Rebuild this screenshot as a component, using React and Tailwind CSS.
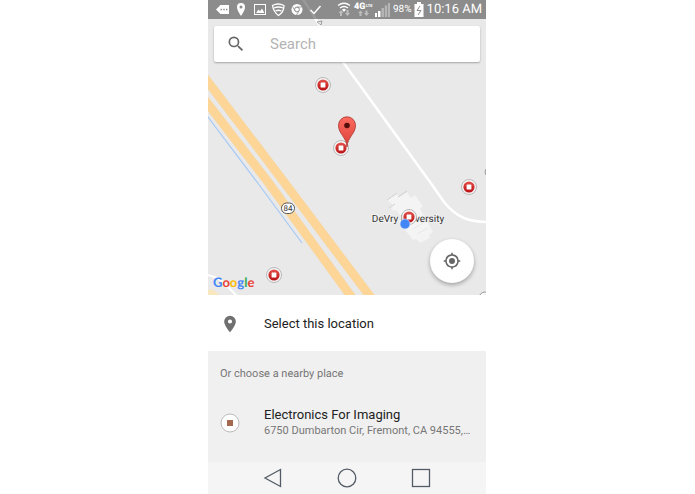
function Poi({ x, y }) {
  return (
    <g transform={`translate(${x} ${y})`}>
      <circle r="7.5" fill="#f6f6f6" stroke="#a9a9a9" strokeWidth="0.8" />
      <circle r="5.6" fill="url(#poi)" />
      <rect x="-2.4" y="-2.4" width="4.8" height="4.8" rx="0.5" fill="#fff" />
    </g>
  );
}

function MapCanvas() {
  return (
    <svg
      className="absolute inset-0 h-full w-full"
      viewBox="0 0 278 295"
      preserveAspectRatio="xMidYMid slice"
      role="img"
      aria-label="Map"
    >
      <defs>
        <linearGradient id="poi" x1="0" y1="0" x2="0" y2="1">
          <stop offset="0" stopColor="#e2524c" />
          <stop offset="1" stopColor="#b80f14" />
        </linearGradient>
        <linearGradient id="pin" x1="0" y1="0" x2="0" y2="1">
          <stop offset="0" stopColor="#fb6a60" />
          <stop offset="1" stopColor="#dd4138" />
        </linearGradient>
      </defs>
      <rect width="278" height="295" fill="#e9e9e9" />
      <g fill="none">
        <path d="M-12 66L0 82L76 182L161 295L173 311" stroke="#f6d7a4" strokeWidth="9" />
        <path d="M-12 66L0 82L76 182L161 295L173 311" stroke="#fdd597" strokeWidth="7.6" />
        <path d="M-12 88L0 104L60 182L142 295L154 311" stroke="#f6d7a4" strokeWidth="9" />
        <path d="M-12 88L0 104L60 182L142 295L154 311" stroke="#fdd597" strokeWidth="7.6" />
        <path d="M-4 112L0 117L52 186L94 243" stroke="#a5c9f5" strokeWidth="1.2" />
        <path d="M93 -4L135 62L222 182L236 202Q246 214 256 218T279 222" stroke="#fff" strokeWidth="2.5" />
        <path d="M0 275Q8 277 14 281L29 296" stroke="#fff" strokeWidth="2" />
        <path d="M109 22l5-1-1 4z" stroke="#8a8a8a" strokeWidth="0.8" />
        <circle cx="281" cy="172" r="4" stroke="#999" />
        <circle cx="277" cy="298" r="6" fill="#f6f6f6" stroke="#999" />
      </g>
      <path d="M0 295V290L4 289L12 295Z" fill="#f8e7bf" />
      <path
        d="M179 200L189 194L191 197L199 192L203 198L207 195L215 206L212 209L218 220L225 232L221 235L222 238L212 243L208 239L205 240L191 222L194 218L188 210L185 211L182 207L185 205Z"
        fill="#f4f4f4"
      />
      <path d="M179 200L189 193M181 208L187 204M190 197L199 191" stroke="#c9c9c9" strokeWidth="0.8" />
      <path d="M202 224L212 218M205 229L215 223M209 234L220 228" stroke="#e5e5e5" strokeWidth="0.8" />
      <rect x="73.500" y="203" width="13" height="10.500" rx="5.200" fill="#fff" stroke="#555" />
      <text x="80" y="211" textAnchor="middle" fontSize="8" fontFamily="Roboto, sans-serif" fill="#333">84</text>
      <text x="200" y="222" textAnchor="middle" fontSize="10" fontFamily="Roboto, sans-serif" fill="#333" stroke="#f1f1f1" strokeWidth="2" paintOrder="stroke">DeVry University</text>
      <Poi x={115} y={85} />
      <Poi x={133} y={148} />
      <Poi x={261} y={187} />
      <Poi x={66} y={275} />
      <Poi x={201} y={217} />
      <circle cx="197" cy="224" r="5" fill="#4285f4" stroke="#dbe7fb" strokeWidth="0.6" />
      <path d="M139 147C138.500 137 130.500 134 130.500 125.300A8.500 8.500 0 0 1 147.500 125.300C147.500 134 139.500 137 139 147Z" fill="url(#pin)" stroke="#a8322c" strokeWidth="0.8" />
      <circle cx="139" cy="125.500" r="2.800" fill="#540f0c" />
    </svg>
  );
}

function StatusBar() {
  return (
    <header className="relative flex h-[19px] items-center bg-black/40 px-1.5 text-white">
      <svg className="h-[19px] w-[178px] shrink-0" viewBox="214 0 178 19" fill="#fff" aria-hidden="true">
        <path d="M216 9.500L220.500 5H229V14H220.500Z" />
        <path d="M220.500 9.500h1.400M223.300 9.500h1.400M226 9.500h1.400" stroke="#8c8c8c" strokeWidth="1.4" />
        <path fillRule="evenodd" d="M241 3A4 4 0 0 0 237 7C237 10.500 241 16 241 16S245 10.500 245 7A4 4 0 0 0 241 3ZM241 5.500A1.500 1.500 0 1 1 241 8.500A1.500 1.500 0 0 1 241 5.500Z" />
        <path fillRule="evenodd" d="M254 4H266V15H254ZM255 5V14H265V5Z" />
        <path d="M256 13L258.500 9.500L260 11.300L262 8.500L264.500 13Z" />
        <g fill="none" stroke="#fff" strokeWidth="1.300">
          <path d="M272.500 5.500Q278 2.500 284 5.500Q284 12 278.500 15.500Q273.500 12 272.500 5.500Z" />
          <path d="M274 8Q278.500 6 283 8M275.500 11Q278.500 9.500 281.500 11" />
        </g>
        <circle cx="297" cy="9.500" r="5.500" />
        <circle cx="297" cy="9.500" r="2.400" stroke="#8c8c8c" strokeWidth="1" />
        <path d="M297 7H302M295 10.800L292.500 6.500M299 10.800L296.500 15" stroke="#8c8c8c" strokeWidth="0.8" />
        <path d="M310.500 10L314 13.500L320.500 6" fill="none" stroke="#fff" strokeWidth="1.500" />
        <g fill="none" stroke="#fff" strokeWidth="1.400">
          <path d="M338 5.500Q344 1 350 5.500M340 8Q344 5 348 8" />
        </g>
        <path d="M342 9.500Q344 8 346 9.500L344 12Z" />
        <path d="M338.500 13L341 10L343.500 13H342V16H340V13ZM345 13H346.500V10H348.500V13H350L347.500 16Z" fill="#bdbdbd" />
        <text x="354" y="9" fontSize="9" fontWeight="900" fontFamily="Roboto, sans-serif">4G</text>
        <text x="366" y="7" fontSize="4" fontWeight="900" fontFamily="Roboto, sans-serif">LTE</text>
        <path d="M358 13L360.500 10.500L363 13H361.500V16H359.500V13ZM364 13H365.500V10.500H367.500V13H369L366.500 16Z" fill="#bdbdbd" />
        <path d="M375 13h2v4h-2zM378 11h2.500v6H378z" />
        <path d="M381.500 8H384v9h-2.500zM384.800 5.500h2.400V17h-2.400zM388 3h2v14h-2z" fill="#b5b5b5" />
      </svg>
      <span className="ml-px w-5 text-[10px] leading-none">98%</span>
      <svg className="ml-0.5 h-[19px] w-2.5 shrink-0" viewBox="0 0 10 19" aria-hidden="true">
        <path d="M3 2H7V4H9.500V17H0.500V4H3Z" fill="#fff" />
        <path d="M6 6L3 10.500H7L4 15" fill="none" stroke="#8c8c8c" />
      </svg>
      <time className="ml-[3px] text-[13px] leading-none whitespace-nowrap">10:16 AM</time>
    </header>
  );
}

function Logo() {
  return (
    <div className="font-[Lato,sans-serif] text-[13px] leading-4 font-bold" aria-label="Google">
      <span className="text-[#4285f4]">G</span>
      <span className="text-[#ea4335]">o</span>
      <span className="text-[#fbbc05]">o</span>
      <span className="text-[#4285f4]">g</span>
      <span className="text-[#34a853]">l</span>
      <span className="text-[#ea4335]">e</span>
    </div>
  );
}

function SearchIcon() {
  return (
    <svg className="size-5 shrink-0" viewBox="0 0 24 24" fill="#666" aria-hidden="true">
      <path d="M15.500 14h-.79l-.28-.27A6.470 6.470 0 0 0 16 9.500 6.500 6.500 0 1 0 9.500 16c1.610 0 3.090-.59 4.230-1.570l.27.28v.79l5 4.990L20.490 19l-4.990-5zm-6 0a4.500 4.500 0 1 1 0-9 4.500 4.500 0 0 1 0 9z" />
    </svg>
  );
}

function MyLocation() {
  return (
    <svg className="size-[18px]" viewBox="0 0 24 24" fill="#666" aria-hidden="true">
      <path d="M12 8a4 4 0 1 0 0 8 4 4 0 0 0 0-8zm8.940 3A8.990 8.990 0 0 0 13 3.060V1h-2v2.060A8.990 8.990 0 0 0 3.060 11H1v2h2.060A8.990 8.990 0 0 0 11 20.940V23h2v-2.060A8.990 8.990 0 0 0 20.940 13H23v-2h-2.060zM12 19a7 7 0 1 1 0-14 7 7 0 0 1 0 14z" />
    </svg>
  );
}

export default function App() {
  return (
    <div className="flex min-h-screen justify-center bg-white pr-px font-[Roboto,sans-serif] [text-rendering:geometricPrecision]">
      <main className="flex w-full max-w-[278px] flex-col">
        <section className="relative flex h-[295px] flex-col overflow-hidden">
          <MapCanvas />
          <StatusBar />
          <label className="relative mx-1.5 mt-[7px] flex h-9 items-center gap-5 rounded-xs bg-white px-3 shadow-[0_1px_2px_rgba(0,0,0,0.3)]">
            <SearchIcon />
            <input
              type="text"
              placeholder="Search"
              aria-label="Search"
              className="w-full min-w-0 bg-transparent pl-1 text-[15px] outline-none placeholder:text-[#b3b3b3]"
            />
          </label>
          <div className="relative mt-auto flex items-end justify-between pr-3 pb-[5px] pl-[5px]">
            <Logo />
            <button
              type="button"
              aria-label="My location"
              className="mb-[7px] flex size-11 items-center justify-center rounded-full bg-white shadow-[0_2px_4px_rgba(0,0,0,0.3)]"
            >
              <MyLocation />
            </button>
          </div>
        </section>
        <button type="button" className="flex h-14 items-center gap-6 px-3 pt-px text-left text-[13px] text-[#222]">
          <svg className="size-5 shrink-0" viewBox="0 0 24 24" fill="#707070" aria-hidden="true">
            <path d="M12 2a7 7 0 0 0-7 7c0 5.250 7 13 7 13s7-7.750 7-13a7 7 0 0 0-7-7zm0 9.500a2.500 2.500 0 1 1 0-5 2.500 2.500 0 0 1 0 5z" />
          </svg>
          Select this location
        </button>
        <section className="h-[111px] bg-[#f0f0f0] px-3 pt-[15px]">
          <h2 className="text-[11px] leading-4 text-[#777]">Or choose a nearby place</h2>
          <button type="button" className="mt-[25px] flex w-full items-center gap-6 text-left">
            <svg className="size-5 shrink-0" viewBox="0 0 20 20" aria-hidden="true">
              <circle cx="10" cy="10" r="9" fill="#fff" stroke="#bbb" />
              <rect x="7" y="7" width="6" height="6" fill="#a5694f" />
            </svg>
            <span className="min-w-0 flex-1">
              <span className="block truncate text-[13px] leading-4 text-[#222]">Electronics For Imaging</span>
              <span className="block truncate text-[11px] leading-4 text-[#777]">6750 Dumbarton Cir, Fremont, CA 94555,…</span>
            </span>
          </button>
        </section>
        <nav className="flex h-8 items-center justify-center gap-[54px] bg-[#f5f5f5]">
          <button type="button" aria-label="Back">
            <svg className="size-5" viewBox="0 0 20 20" fill="none" stroke="#535c66" strokeWidth="1.300">
              <path d="M17.500 1.500V18.500L2 10Z" />
            </svg>
          </button>
          <button type="button" aria-label="Home">
            <svg className="size-5" viewBox="0 0 20 20" fill="none" stroke="#535c66" strokeWidth="1.300">
              <circle cx="10" cy="10" r="8.800" />
            </svg>
          </button>
          <button type="button" aria-label="Recent apps">
            <svg className="size-5" viewBox="0 0 20 20" fill="none" stroke="#535c66" strokeWidth="1.300">
              <rect x="1.500" y="1.500" width="17" height="17" />
            </svg>
          </button>
        </nav>
      </main>
    </div>
  );
}
